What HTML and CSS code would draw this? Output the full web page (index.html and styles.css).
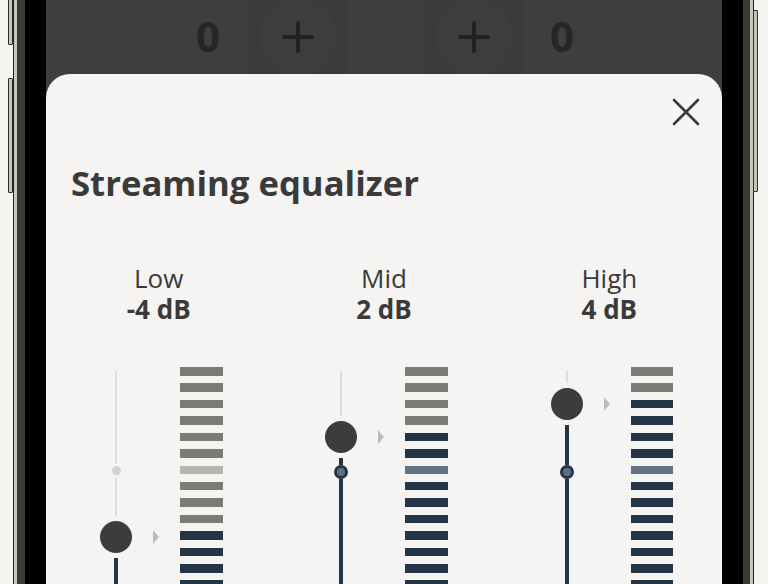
FILE: index.html
```html
<!DOCTYPE html>
<html lang="en">
<head>
<meta charset="utf-8">
<title>Streaming equalizer</title>
<link rel="stylesheet" href="styles.css">
</head>
<body>
<div class="phone">
  <span class="side-btn btn-l1"></span>
  <span class="side-btn btn-l2"></span>
  <span class="side-btn btn-r1"></span>
  <div class="rim">
    <div class="band">
      <div class="bezel">
        <div class="screen">
          <div class="topbar">
            <span class="count">0</span>
            <div class="pill pill-left">
              <div class="circle">
                <svg width="32" height="32" viewBox="0 0 32 32"><path d="M16 2V30M2 16H30" stroke="#222" stroke-width="4" stroke-linecap="round" fill="none"/></svg>
              </div>
            </div>
            <div class="pill pill-right">
              <div class="circle">
                <svg width="32" height="32" viewBox="0 0 32 32"><path d="M16 2V30M2 16H30" stroke="#222" stroke-width="4" stroke-linecap="round" fill="none"/></svg>
              </div>
            </div>
            <span class="count count-right">0</span>
          </div>

          <div class="sheet">
            <div class="sheet-head">
              <button class="close" aria-label="Close">
                <svg width="28" height="28" viewBox="0 0 28 28"><path d="M2 2L26 26M26 2L2 26" stroke="#3a3a3a" stroke-width="2.6" stroke-linecap="round" fill="none"/></svg>
              </button>
            </div>
            <h1 class="title">Streaming equalizer</h1>

            <div class="bands">
              <!-- Low -->
              <div class="band-col">
                <div class="band-label"><span class="name">Low</span><span class="value">-4 dB</span></div>
                <div class="eq-row">
                  <div class="slider">
                    <span class="thin" style="height:93px"></span>
                    <span class="zero-dot"></span>
                    <span class="thin thin-after" style="height:38px"></span>
                    <div class="knob-row"><span class="knob"></span><span class="arrow"></span></div>
                    <span class="thick thick-fill"></span>
                  </div>
                  <div class="meter">
                    <span class="bar off"></span><span class="bar off"></span><span class="bar off"></span>
                    <span class="bar off"></span><span class="bar off"></span><span class="bar off"></span>
                    <span class="bar off-zero"></span>
                    <span class="bar off"></span><span class="bar off"></span><span class="bar off"></span>
                    <span class="bar on"></span><span class="bar on"></span><span class="bar on"></span><span class="bar on"></span>
                  </div>
                </div>
              </div>

              <!-- Mid -->
              <div class="band-col">
                <div class="band-label"><span class="name">Mid</span><span class="value">2 dB</span></div>
                <div class="eq-row">
                  <div class="slider">
                    <span class="thin" style="height:45px"></span>
                    <div class="knob-row"><span class="knob"></span><span class="arrow"></span></div>
                    <span class="thick thick-top" style="height:6.5px"></span>
                    <span class="ring"></span>
                    <span class="thick thick-fill"></span>
                  </div>
                  <div class="meter">
                    <span class="bar off"></span><span class="bar off"></span><span class="bar off"></span><span class="bar off"></span>
                    <span class="bar on"></span><span class="bar on"></span>
                    <span class="bar on-zero"></span>
                    <span class="bar on"></span><span class="bar on"></span><span class="bar on"></span>
                    <span class="bar on"></span><span class="bar on"></span><span class="bar on"></span><span class="bar on"></span>
                  </div>
                </div>
              </div>

              <!-- High -->
              <div class="band-col">
                <div class="band-label"><span class="name">High</span><span class="value">4 dB</span></div>
                <div class="eq-row">
                  <div class="slider">
                    <span class="thin" style="height:12px"></span>
                    <div class="knob-row"><span class="knob"></span><span class="arrow"></span></div>
                    <span class="thick thick-top" style="height:39.5px"></span>
                    <span class="ring"></span>
                    <span class="thick thick-fill"></span>
                  </div>
                  <div class="meter">
                    <span class="bar off"></span><span class="bar off"></span>
                    <span class="bar on"></span><span class="bar on"></span><span class="bar on"></span><span class="bar on"></span>
                    <span class="bar on-zero"></span>
                    <span class="bar on"></span><span class="bar on"></span><span class="bar on"></span>
                    <span class="bar on"></span><span class="bar on"></span><span class="bar on"></span><span class="bar on"></span>
                  </div>
                </div>
              </div>
            </div>
          </div>
        </div>
      </div>
    </div>
  </div>
</div>
</body>
</html>
```

FILE: styles.css
```css
* {
  box-sizing: border-box;
}

html, body {
  margin: 0;
  padding: 0;
}

body {
  width: 768px;
  height: 584px;
  overflow: hidden;
  background: #f4f4f3;
  font-family: "Open Sans", "Noto Sans", sans-serif;
  color: #3a3a3a;
}

/* ---------- phone frame ---------- */
.phone {
  position: relative;
  margin-left: 13px;
  width: 741px;
  height: 584px;
  padding: 0 1px;
  background: #22211f;
}

.rim {
  height: 100%;
  padding: 0 3px;
  background: #cbc6bd;
}

.band {
  height: 100%;
  padding: 0 7px 0 8px;
  background: #3b3a36;
}

.bezel {
  height: 100%;
  padding: 0 21px;
  background: #000;
}

.screen {
  height: 100%;
  display: flex;
  flex-direction: column;
  background: #3e3e3e;
  overflow: hidden;
}

.side-btn {
  position: absolute;
  width: 5px;
  background: #c9c4bb;
  border: 1px solid #2e2d2a;
  border-radius: 1px;
}

.btn-l1 {
  left: -5px;
  top: -10px;
  height: 55px;
}

.btn-l2 {
  left: -5px;
  top: 78px;
  height: 115px;
}

.btn-r1 {
  right: -4px;
  top: 10px;
  height: 182px;
}

/* ---------- top bar behind the sheet ---------- */
.topbar {
  flex: 0 0 74px;
  display: flex;
  align-items: center;
  padding-left: 142px;
  overflow: hidden;
}

.count {
  width: 40px;
  flex-shrink: 0;
  text-align: center;
  font-size: 42px;
  font-weight: 700;
  line-height: 1;
  color: #262626;
  margin-top: -2px;
}

.pill {
  flex-shrink: 0;
  width: 101px;
  height: 200px;
  border-radius: 50px;
  background: #3b3b3b;
  display: flex;
  align-items: center;
  justify-content: center;
}

.pill-left {
  margin-left: 19px;
}

.pill-right {
  margin-left: 75px;
}

.count-right {
  margin-left: 18px;
}

.circle {
  width: 78px;
  height: 78px;
  border-radius: 50%;
  background: #3d3d3d;
  display: flex;
  align-items: center;
  justify-content: center;
}

/* ---------- sheet ---------- */
.sheet {
  flex: 1;
  background: #f5f4f2;
  border-radius: 24px 24px 0 0;
}

.sheet-head {
  display: flex;
  justify-content: flex-end;
  padding: 24px 22px 0 0;
}

.close {
  width: 28px;
  height: 28px;
  padding: 0;
  border: 0;
  background: transparent;
  display: flex;
}

.title {
  margin: 37px 0 0;
  padding-left: 25px;
  font-size: 34.7px;
  line-height: 40px;
  font-weight: 700;
  color: #3a3a3a;
}

.bands {
  display: grid;
  grid-template-columns: repeat(3, 1fr);
  margin-top: 60px;
}

.band-label {
  display: flex;
  flex-direction: column;
  align-items: center;
  font-size: 26px;
  line-height: 31px;
  color: #3a3a3a;
}

.band-label .value {
  font-weight: 700;
}

.eq-row {
  display: flex;
  align-items: stretch;
  height: 260px;
  margin-top: 42px;
  padding-left: 54px;
}

/* ---------- slider ---------- */
.slider {
  width: 59px;
  margin-right: 21px;
  padding-top: 4px;
  display: flex;
  flex-direction: column;
  align-items: flex-start;
}

.thin {
  display: block;
  width: 2px;
  margin-left: 15px;
  background: #dfddda;
}

.thin-after {
  margin-top: 3px;
}

.zero-dot {
  display: block;
  width: 9px;
  height: 9px;
  margin-top: 2px;
  margin-left: 11.5px;
  border-radius: 50%;
  background: #d4d2cf;
}

.knob-row {
  display: flex;
  align-items: center;
  gap: 21px;
  margin-top: 5px;
}

.knob {
  display: block;
  width: 32px;
  height: 32px;
  border-radius: 50%;
  background: #3c3c3c;
}

.arrow {
  display: block;
  width: 0;
  height: 0;
  border-left: 6px solid #bfbdb9;
  border-top: 7.5px solid transparent;
  border-bottom: 7.5px solid transparent;
}

.thick {
  display: block;
  width: 4px;
  margin-left: 14px;
  background: #243548;
}

.thick-top {
  margin-top: 5px;
}

.knob-row + .thick-fill {
  margin-top: 5px;
}

.thick-fill {
  flex: 1;
}

.ring {
  display: block;
  width: 14px;
  height: 14px;
  margin-left: 9px;
  border-radius: 50%;
  border: 3px solid #243548;
  background: #5f7181;
}

/* ---------- level meter ---------- */
.meter {
  width: 42.5px;
  display: flex;
  flex-direction: column;
  gap: 7.93px;
}

.bar {
  display: block;
  flex-shrink: 0;
  height: 8.5px;
}

.bar.off {
  background: #7c7b78;
}

.bar.off-zero {
  background: #b7b5b1;
}

.bar.on {
  background: #243548;
}

.bar.on-zero {
  background: #627383;
}
```
